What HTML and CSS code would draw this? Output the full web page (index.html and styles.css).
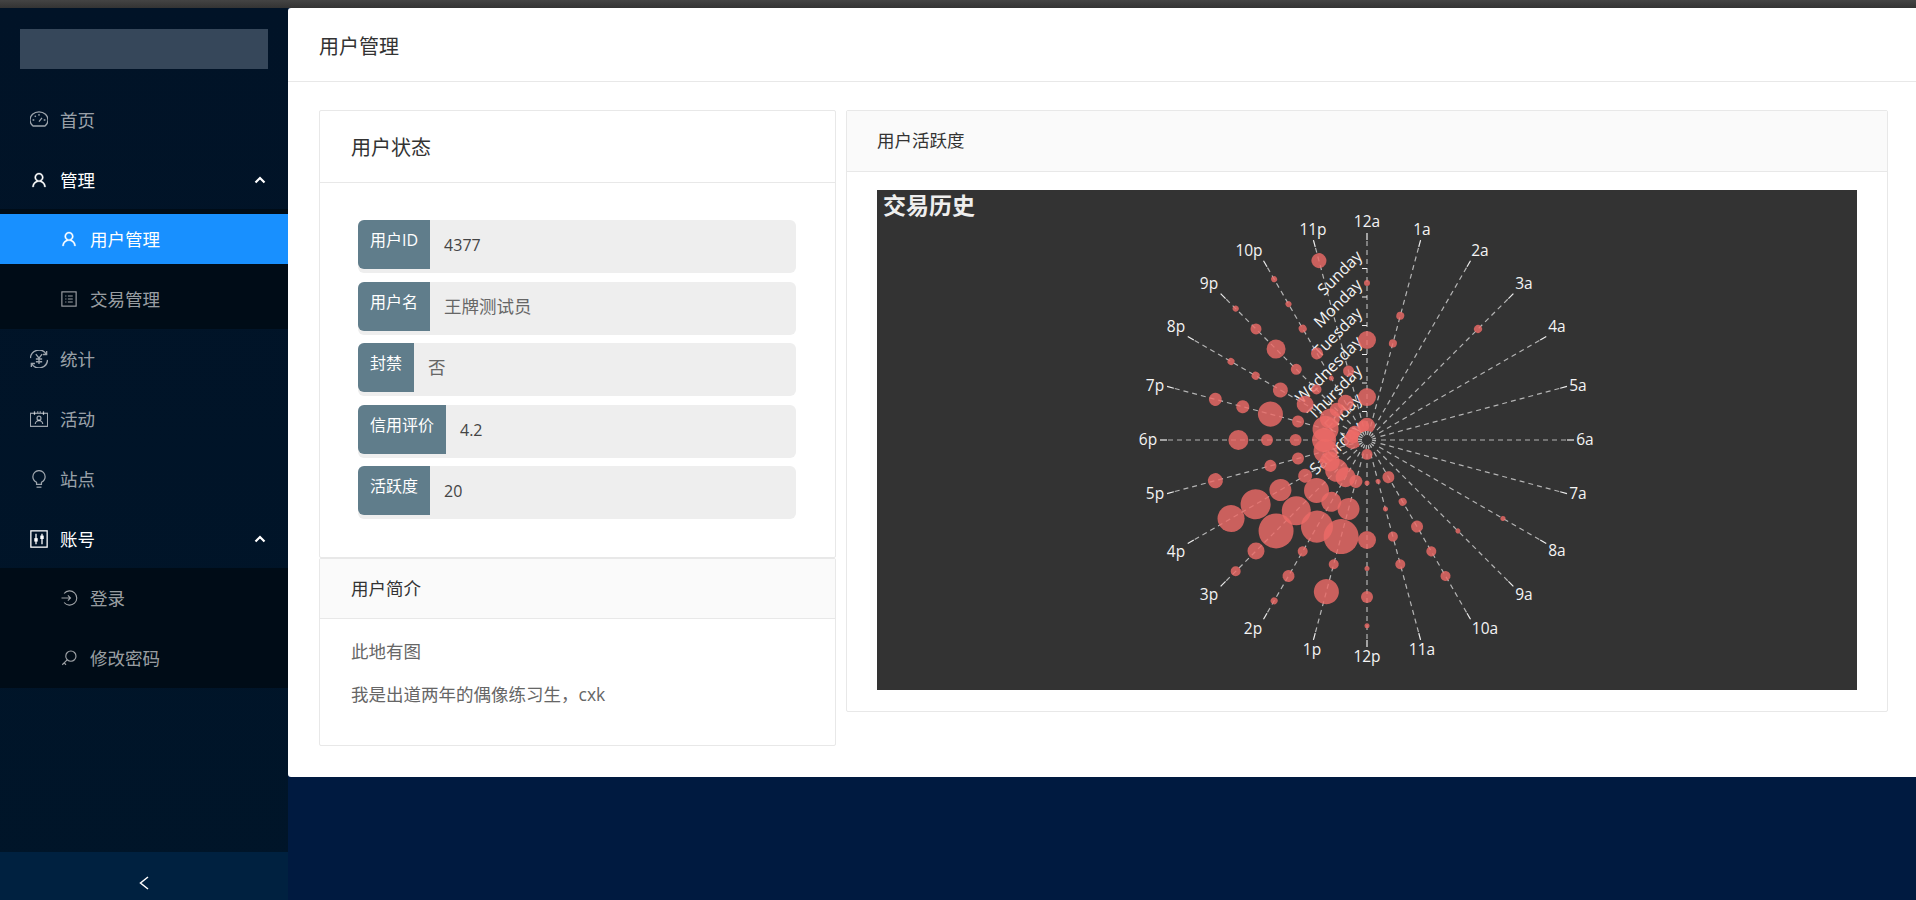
FILE: index.html
```html
<!DOCTYPE html>
<html lang="zh">
<head>
<meta charset="utf-8">
<title>用户管理</title>
<link rel="stylesheet" href="styles.css">
</head>
<body>
<svg class="defs" width="0" height="0">
  <symbol id="i-dash" viewBox="1.500 2 21 21"><path d="M5 19.500h14a10.500 9.500 0 1 0-14 0z"/><path d="M12 14.500l3.500-4.500M4.500 12.500h2M17.500 12.500h2M7 7.500l1.300 1.300M12 5.500v2"/></symbol>
  <symbol id="i-user" viewBox="0 0 1024 1024"><path class="solid" d="M858.500 763.600a374 374 0 0 0-80.600-119.500 375.630 375.630 0 0 0-119.500-80.600c-.4-.2-.8-.3-1.200-.5C719.500 518 760 444.700 760 362c0-137-111-248-248-248S264 225 264 362c0 82.700 40.500 156 102.800 201.100-.4.2-.8.3-1.200.5-44.800 18.900-85 46-119.500 80.600a375.630 375.630 0 0 0-80.600 119.500A371.700 371.700 0 0 0 136 901.800a8 8 0 0 0 8 8.200h60c4.400 0 7.900-3.500 8-7.800 2-77.200 33-149.500 87.800-204.300 56.700-56.700 132-87.900 212.200-87.900s155.500 31.200 212.200 87.900C779 752.700 810 825 812 902.200c.1 4.400 3.600 7.800 8 7.800h60a8 8 0 0 0 8-8.200c-1-47.800-10.900-94.300-29.500-138.200zM512 534c-45.900 0-89.100-17.900-121.600-50.400S340 407.900 340 362c0-45.900 17.900-89.100 50.400-121.600S466.100 190 512 190s89.100 17.900 121.600 50.400S684 316.100 684 362c0 45.900-17.900 89.100-50.400 121.600S557.900 534 512 534z"/></symbol>
  <symbol id="i-profile" viewBox="0 0 24 24"><rect x="2.500" y="2.500" width="19" height="19"/><path d="M7 8h1.500M10.500 8H17M7 12h1.500M10.500 12H17M7 16h1.500M10.500 16H17"/></symbol>
  <symbol id="i-money" viewBox="2 2 20 20"><path d="M2.500 11A9.500 9.500 0 0 1 20 6.500M21.500 13A9.500 9.500 0 0 1 4 17.500M20.500 3v4h-4M3.500 21v-4h4"/><path d="M8.500 6.500L12 11l3.500-4.500M12 11v6.500M8.500 12h7M8.500 15h7"/></symbol>
  <symbol id="i-contacts" viewBox="1 1.500 22 21"><rect x="1.500" y="5" width="21" height="16"/><path d="M6.500 2.500v4.500M17.500 2.500v4.500M10.500 2.500v2M13.500 2.500v2"/><circle cx="12" cy="11" r="2.400"/><path d="M7.500 18a4.500 4 0 0 1 9 0"/></symbol>
  <symbol id="i-bulb" viewBox="1 1 22 22"><path d="M9 18.500h6v-2.500c2.700-1.500 4.500-3.800 4.500-6.800a7.500 7.500 0 0 0-15 0c0 3 1.800 5.300 4.500 6.800z"/><path d="M9 22h6"/></symbol>
  <symbol id="i-control" viewBox="1.500 1.500 21 21"><rect x="2.500" y="2.500" width="19" height="19"/><path d="M8.500 6v12M15.500 6v12"/><rect class="solid" x="6.500" y="11" width="4" height="4"/><rect class="solid" x="13.500" y="8" width="4" height="4"/></symbol>
  <symbol id="i-login" viewBox="0 0 24 24"><path d="M5.500 6a9.500 9.500 0 1 1 0 12"/><path d="M2 12h12M10.500 8.500L14 12l-3.500 3.500"/></symbol>
  <symbol id="i-key" viewBox="0 0 24 24"><circle cx="14.500" cy="9.500" r="6.800"/><path d="M9.500 14.500L3 21M5.500 18.500l2.500 2.500"/></symbol>
  <symbol id="i-up" viewBox="0 0 12 8"><path class="thick" d="M1.500 6.500L6 2l4.500 4.500"/></symbol>
  <symbol id="i-left" viewBox="0 0 12 16"><path d="M10 2L2.500 8l7.500 6"/></symbol>
</svg>

<div class="topstrip"></div>
<div class="app">
  <aside class="sider">
    <div class="logo"></div>
    <nav class="menu">
      <a class="item"><svg class="ic"><use href="#i-dash"/></svg><span>首页</span></a>
      <a class="item open"><svg class="ic"><use href="#i-user"/></svg><span>管理</span><svg class="chev"><use href="#i-up"/></svg></a>
      <div class="sub">
        <a class="item leaf selected"><svg class="ic"><use href="#i-user"/></svg><span>用户管理</span></a>
        <a class="item leaf"><svg class="ic"><use href="#i-profile"/></svg><span>交易管理</span></a>
      </div>
      <a class="item"><svg class="ic"><use href="#i-money"/></svg><span>统计</span></a>
      <a class="item"><svg class="ic"><use href="#i-contacts"/></svg><span>活动</span></a>
      <a class="item"><svg class="ic"><use href="#i-bulb"/></svg><span>站点</span></a>
      <a class="item open"><svg class="ic"><use href="#i-control"/></svg><span>账号</span><svg class="chev"><use href="#i-up"/></svg></a>
      <div class="sub">
        <a class="item leaf"><svg class="ic"><use href="#i-login"/></svg><span>登录</span></a>
        <a class="item leaf"><svg class="ic"><use href="#i-key"/></svg><span>修改密码</span></a>
      </div>
    </nav>
    <div class="collapse"><svg class="back"><use href="#i-left"/></svg></div>
  </aside>

  <div class="canvas">
    <main class="panel">
      <header class="page-head">用户管理</header>
      <div class="content">
        <div class="col-left">
          <section class="card status">
            <h2 class="status-title">用户状态</h2>
            <div class="status-body">
              <div class="field"><span class="tag">用户ID</span><span class="val num">4377</span></div>
              <div class="field"><span class="tag">用户名</span><span class="val">王牌测试员</span></div>
              <div class="field"><span class="tag">封禁</span><span class="val">否</span></div>
              <div class="field"><span class="tag">信用评价</span><span class="val num">4.2</span></div>
              <div class="field"><span class="tag">活跃度</span><span class="val num">20</span></div>
            </div>
          </section>
          <section class="card intro">
            <h3 class="card-head">用户简介</h3>
            <div class="intro-body">
              <p>此地有图</p>
              <p>我是出道两年的偶像练习生，cxk</p>
            </div>
          </section>
        </div>
        <section class="card col-right">
          <h3 class="card-head">用户活跃度</h3>
          <div class="chart-wrap">
            <svg class="chart" viewBox="0 0 980 500" width="980" height="500">
              <defs>
                <g id="spoke">
                  <line class="dash" y1="-14" y2="-200"/>
                  <line class="tick" y1="-200" y2="-207"/>
                </g>
              </defs>
              <text class="chart-title" x="6" y="24">交易历史</text>
              <g transform="translate(490 250)">
                <g>
                  <use href="#spoke"/>
                  <use href="#spoke" transform="rotate(15)"/>
                  <use href="#spoke" transform="rotate(30)"/>
                  <use href="#spoke" transform="rotate(45)"/>
                  <use href="#spoke" transform="rotate(60)"/>
                  <use href="#spoke" transform="rotate(75)"/>
                  <use href="#spoke" transform="rotate(90)"/>
                  <use href="#spoke" transform="rotate(105)"/>
                  <use href="#spoke" transform="rotate(120)"/>
                  <use href="#spoke" transform="rotate(135)"/>
                  <use href="#spoke" transform="rotate(150)"/>
                  <use href="#spoke" transform="rotate(165)"/>
                  <use href="#spoke" transform="rotate(180)"/>
                  <use href="#spoke" transform="rotate(195)"/>
                  <use href="#spoke" transform="rotate(210)"/>
                  <use href="#spoke" transform="rotate(225)"/>
                  <use href="#spoke" transform="rotate(240)"/>
                  <use href="#spoke" transform="rotate(255)"/>
                  <use href="#spoke" transform="rotate(270)"/>
                  <use href="#spoke" transform="rotate(285)"/>
                  <use href="#spoke" transform="rotate(300)"/>
                  <use href="#spoke" transform="rotate(315)"/>
                  <use href="#spoke" transform="rotate(330)"/>
                  <use href="#spoke" transform="rotate(345)"/>
                </g>
                <g class="rticks">
                  <line x1="-5" x2="0" y1="-171.500" y2="-171.500"/>
                  <line x1="-5" x2="0" y1="-143" y2="-143"/>
                  <line x1="-5" x2="0" y1="-114.500" y2="-114.500"/>
                  <line x1="-5" x2="0" y1="-85.500" y2="-85.500"/>
                  <line x1="-5" x2="0" y1="-57" y2="-57"/>
                  <line x1="-5" x2="0" y1="-28.500" y2="-28.500"/>
                </g>
              </g>
              <g class="day">
                <text transform="translate(482 63) rotate(-45)">Sunday</text>
                <text transform="translate(482 91.700) rotate(-45)">Monday</text>
                <text transform="translate(482 120.100) rotate(-45)">Tuesday</text>
                <text transform="translate(482 148.700) rotate(-45)">Wednesday</text>
                <text transform="translate(482 177.300) rotate(-45)">Thursday</text>
                <text transform="translate(482 205.800) rotate(-45)">Friday</text>
                <text transform="translate(482 234.400) rotate(-45)">Saturday</text>
              </g>
              <g transform="translate(490 250)">
                <g class="bubbles">
                  <g><circle cy="-157" r="3"/><circle cy="-100" r="9"/><circle cy="-42.900" r="9"/><circle cy="-14.300" r="8"/></g>
                  <g transform="rotate(15)"><circle cy="-128.600" r="4"/><circle cy="-100" r="4"/></g>
                  <g transform="rotate(45)"><circle cy="-157" r="4"/></g>
                  <g transform="rotate(120)"><circle cy="-157" r="2.500"/></g>
                  <g transform="rotate(135)"><circle cy="-128.600" r="2.500"/></g>
                  <g transform="rotate(150)"><circle cy="-157" r="5"/><circle cy="-128.600" r="5"/><circle cy="-100" r="6"/><circle cy="-71.400" r="4"/><circle cy="-42.900" r="6"/></g>
                  <g transform="rotate(165)"><circle cy="-128.600" r="5"/><circle cy="-100" r="5"/><circle cy="-71.400" r="2.500"/><circle cy="-42.900" r="2.500"/></g>
                  <g transform="rotate(180)"><circle cy="-185.700" r="2.500"/><circle cy="-157" r="6"/><circle cy="-128.600" r="2.500"/><circle cy="-100" r="9"/><circle cy="-42.900" r="2.500"/><circle cy="-14.300" r="5.500"/></g>
                  <g transform="rotate(195)"><circle cy="-157" r="12.500"/><circle cy="-128.600" r="5"/><circle cy="-100" r="17.500"/><circle cy="-71.400" r="11"/><circle cy="-42.900" r="6.500"/></g>
                  <g transform="rotate(210)"><circle cy="-185.700" r="3.500"/><circle cy="-157" r="6"/><circle cy="-128.600" r="5"/><circle cy="-100" r="16"/><circle cy="-71.400" r="10"/><circle cy="-42.900" r="10"/></g>
                  <g transform="rotate(225)"><circle cy="-185.700" r="5"/><circle cy="-157" r="8.500"/><circle cy="-128.600" r="17.500"/><circle cy="-100" r="14.500"/><circle cy="-71.400" r="12.500"/><circle cy="-42.900" r="11.500"/></g>
                  <g transform="rotate(240)"><circle cy="-157" r="13.500"/><circle cy="-128.600" r="15"/><circle cy="-100" r="11"/><circle cy="-71.400" r="7"/><circle cy="-42.900" r="10"/></g>
                  <g transform="rotate(255)"><circle cy="-157" r="7.500"/><circle cy="-100" r="6"/><circle cy="-71.400" r="6"/><circle cy="-42.900" r="12"/></g>
                  <g transform="rotate(270)"><circle cy="-128.600" r="10"/><circle cy="-100" r="6"/><circle cy="-71.400" r="6"/><circle cy="-42.900" r="12"/><circle cy="-14.300" r="9"/></g>
                  <g transform="rotate(285)"><circle cy="-157" r="6.500"/><circle cy="-128.600" r="6.500"/><circle cy="-100" r="12.500"/><circle cy="-71.400" r="6"/><circle cy="-42.900" r="13"/><circle cy="-14.300" r="7"/></g>
                  <g transform="rotate(300)"><circle cy="-157" r="3.500"/><circle cy="-128.600" r="4"/><circle cy="-100" r="7.500"/><circle cy="-71.400" r="8.500"/><circle cy="-42.900" r="10"/><circle cy="-14.300" r="7"/></g>
                  <g transform="rotate(315)"><circle cy="-185.700" r="3"/><circle cy="-157" r="5.500"/><circle cy="-128.600" r="9.500"/><circle cy="-100" r="5.500"/><circle cy="-71.400" r="5"/><circle cy="-42.900" r="7"/></g>
                  <g transform="rotate(330)"><circle cy="-185.700" r="3"/><circle cy="-157" r="3"/><circle cy="-128.600" r="4"/><circle cy="-100" r="6"/><circle cy="-71.400" r="2.500"/><circle cy="-42.900" r="8"/></g>
                  <g transform="rotate(345)"><circle cy="-185.700" r="7.500"/><circle cy="-71.400" r="5.500"/><circle cy="-14.300" r="6"/></g>
                </g>
                <circle class="hub-hole" r="9"/>
                <circle class="hub" r="7"/>
              </g>
              <g class="hour">
                <text x="490" y="31">12a</text><text x="545" y="39">1a</text><text x="603" y="60">2a</text><text x="647" y="93">3a</text>
                <text x="680" y="136">4a</text><text x="701" y="195">5a</text><text x="708" y="249">6a</text><text x="701" y="303">7a</text>
                <text x="680" y="360">8a</text><text x="647" y="404">9a</text><text x="608" y="438">10a</text><text x="545" y="459">11a</text>
                <text x="490" y="466">12p</text><text x="435" y="459">1p</text><text x="376" y="438">2p</text><text x="332" y="404">3p</text>
                <text x="299" y="361">4p</text><text x="278" y="303">5p</text><text x="271" y="249">6p</text><text x="278" y="195">7p</text>
                <text x="299" y="136">8p</text><text x="332" y="93">9p</text><text x="372" y="60">10p</text><text x="436" y="39">11p</text>
              </g>
            </svg>
          </div>
        </section>
      </div>
    </main>
  </div>
</div>
</body>
</html>
```
FILE: styles.css
```css
* { box-sizing: border-box; }
html, body { margin: 0; padding: 0; }
body {
  background: #001a40;
  font-family: "Open Sans", "Noto Sans CJK SC", sans-serif;
  color: #333;
  overflow: hidden;
}
.defs { position: absolute; }
.topstrip { height: 8px; background: linear-gradient(#444 0, #333 100%); }
.app { display: flex; height: 892px; }

.sider {
  width: 288px;
  flex: none;
  display: flex;
  flex-direction: column;
  background: linear-gradient(#011327, #001529);
}
.logo { height: 40px; margin: 21px 20px 21px; background: #36475a; }
.menu { display: flex; flex-direction: column; }
.item {
  display: flex;
  align-items: center;
  height: 50px;
  margin: 5px 0;
  padding-left: 30px;
  color: rgba(255, 255, 255, .62);
  font-size: 17.500px;
  flex: none;
}
.item span { margin-left: 12px; margin-bottom: 2px; }
.item.open { color: #fff; margin-bottom: 4px; }
.ic { width: 18px; height: 18px; flex: none; fill: none; stroke: currentColor; stroke-width: 1.500; }
.solid { fill: currentColor; stroke: currentColor; stroke-width: 20; }
rect.solid { stroke: none; }
.chev { width: 12px; height: 8px; margin-left: auto; margin-right: 22px; fill: none; stroke: #fff; }
.thick { stroke-width: 2.200; }
.sub { display: flex; flex-direction: column; background: #000c17; }
.sub .item.leaf { padding-left: 60px; }
.item.selected { background: #1890ff; color: #fff; }
.collapse {
  margin-top: auto;
  height: 48px;
  background: #002140;
  display: flex;
  align-items: center;
  justify-content: center;
}
.back { width: 12px; height: 16px; fill: none; stroke: #fff; stroke-width: 1.500; margin-top: 13px; margin-right: 1px; }

.canvas { flex: 1; min-width: 0; }
.panel { background: #fff; border-radius: 3px 0 0 3px; }
.page-head {
  height: 74px;
  padding: 1px 0 0 31px;
  display: flex;
  align-items: center;
  font-size: 20px;
  color: #333;
  border-bottom: 1px solid #e8e8e8;
}
.content { display: flex; align-items: flex-start; gap: 10px; padding: 28px 28px 31px 31px; }
.col-left { width: 517px; flex: none; }
.col-right { flex: 1; min-width: 0; }
.card { background: #fff; border: 1px solid #e8e8e8; border-radius: 2px; }
.status-title {
  margin: 0;
  height: 72px;
  padding-left: 31px;
  display: flex;
  align-items: center;
  font-size: 20px;
  font-weight: 400;
  color: #333;
  border-bottom: 1px solid #e8e8e8;
}
.status-body { padding: 37px 39px 38px 38px; display: flex; flex-direction: column; gap: 8.500px; }
.field { display: flex; height: 53px; background: #eee; border-radius: 6px; }
.tag {
  height: 49px;
  padding: 7px 12px 0;
  background: #607d8b;
  color: #fff;
  font-size: 16px;
  line-height: 26px;
  border-radius: 6px 0 0 6px;
}
.val { padding: 9px 0 0 14px; font-size: 17.500px; line-height: 30px; color: #666; }
.val.num { font-size: 16px; color: #444; padding-top: 10px; }
.card-head {
  margin: 0;
  height: 60px;
  padding: 0 0 2px 31px;
  display: flex;
  align-items: center;
  font-size: 17.500px;
  font-weight: 400;
  color: #333;
  background: #fafafa;
  border-bottom: 1px solid #e8e8e8;
}
.col-right .card-head { height: 61px; padding: 0 0 3px 30px; }
.intro-body { padding: 17px 31px 36px; font-size: 17.500px; color: #666; }
.intro-body p { margin: 0; line-height: 30px; }
.intro-body p + p { margin-top: 13.300px; }
.chart-wrap { padding: 18px 30px 21px; }
.chart { display: block; background: #333; }

.chart-title { fill: #eee; font-size: 23px; font-weight: 700; }
.hub-hole { fill: #333; }
.hub { fill: none; stroke: #bbb; stroke-width: 4; stroke-dasharray: 1.200 1; }
.dash { stroke: #b4b4b4; stroke-width: 1.200; stroke-dasharray: 5 4; }
.tick { stroke: #eee; stroke-width: 1.200; }
.rticks line { stroke: #eee; stroke-width: 1; }
.bubbles circle { fill: #ec6a66; opacity: .82; }
.hour text { fill: #f4f4f4; font-size: 15.500px; font-weight: 500; text-anchor: middle; dominant-baseline: central; }
.day text { fill: #f4f4f4; font-size: 16px; font-weight: 500; text-anchor: end; dominant-baseline: central; }
```
